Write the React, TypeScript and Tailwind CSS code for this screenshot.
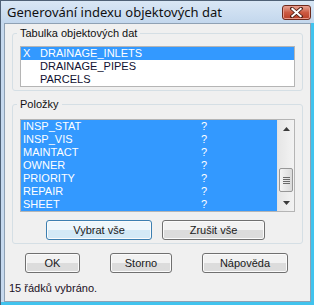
import React from "react";

const tables = [
  { name: "DRAINAGE_INLETS", checked: true },
  { name: "DRAINAGE_PIPES", checked: false },
  { name: "PARCELS", checked: false },
];

const items = ["INSP_STAT", "INSP_VIS", "MAINTACT", "OWNER", "PRIORITY", "REPAIR", "SHEET"];

function Button({ label, width, active }: { label: string; width: string; active?: boolean }) {
  return (
    <button
      className={`${width} h-[20px] rounded-[3px] border text-[11px] leading-[18px] font-normal text-[#1a1a1a] shadow-[inset_0_0_0_1px_#fbfbfb] ${
        active
          ? "border-[#3c7fb1] bg-gradient-to-b from-[#eef7fc] from-50% to-[#d3e9f6] to-50%"
          : "border-[#707070] bg-gradient-to-b from-[#f2f2f2] from-50% to-[#dcdcdc] to-50%"
      }`}
    >
      {label}
    </button>
  );
}

function CloseButton() {
  return (
    <div className="w-[29px] h-[15px] rounded-[3px] border border-[#6e2a1c] bg-gradient-to-b from-[#e4a595] via-[#cc5a42] to-[#b83e26] flex items-center justify-center shadow-[inset_0_0_0_1px_#e8998a]">
      <svg width="13" height="11" viewBox="0 0 13 11">
        <path d="M2 1.5 L11 9.5 M11 1.5 L2 9.5" stroke="#4a1a12" strokeWidth="3.6" strokeLinecap="square" />
        <path d="M2.3 1.8 L10.7 9.2 M10.7 1.8 L2.3 9.2" stroke="#ffffff" strokeWidth="2" strokeLinecap="square" />
      </svg>
    </div>
  );
}

function Scrollbar() {
  return (
    <div className="w-[17px] flex flex-col bg-gradient-to-r from-[#e6e6e6] to-[#f3f3f3] border-l border-[#e3e3e3]">
      <div className="h-[17px] flex items-center justify-center">
        <svg width="7" height="4" viewBox="0 0 7 4">
          <path d="M3.5 0 L7 4 L0 4 Z" fill="#3a3a3a" />
        </svg>
      </div>
      <div className="flex-1 flex flex-col justify-end pb-[2px]">
        <div className="mx-[1px] h-[24px] rounded-[2px] border border-[#979797] bg-gradient-to-r from-[#f4f4f4] to-[#dadada] flex flex-col items-center justify-center gap-[1px]">
          <div className="w-[7px] h-[1px] bg-[#6a6a6a]" />
          <div className="w-[7px] h-[1px] bg-[#6a6a6a]" />
          <div className="w-[7px] h-[1px] bg-[#6a6a6a]" />
          <div className="w-[7px] h-[1px] bg-[#6a6a6a]" />
        </div>
      </div>
      <div className="h-[17px] flex items-center justify-center">
        <svg width="7" height="4" viewBox="0 0 7 4">
          <path d="M0 0 L7 0 L3.5 4 Z" fill="#3a3a3a" />
        </svg>
      </div>
    </div>
  );
}

export default function App() {
  return (
    <div className="w-[314px] h-[305px] flex flex-col bg-[#c6d9ee] border-l border-t border-[#4f6176] font-['Liberation_Sans',Arial,sans-serif] text-[11px] text-black overflow-hidden">
      {/* Title bar */}
      <div className="h-[22px] flex items-center justify-between pl-[6px] pr-[3px] bg-gradient-to-b from-[#d9e7f5] to-[#c3d7ed]">
        <span className="font-['Noto_Sans',sans-serif] text-[13px] leading-[16px] text-[#101010]">
          Generování indexu objektových dat
        </span>
        <CloseButton />
      </div>

      {/* Frame + client */}
      <div className="flex-1 flex pl-[3px] border-r-[3px] border-b-[3px] border-[#41c3ee]">
        <div className="flex-1 flex flex-col bg-[#f0f0f0] border border-[#8fa1b4] px-[7px]">
          <fieldset className="mt-[3px] border border-[#d5dfe5] rounded-[3px] px-[7px] pb-[3px] pt-[6px]">
            <legend className="-ml-[3px] px-[3px] leading-[13px] text-[#101010]">Tabulka objektových dat</legend>
            <div className="h-[41px] border border-[#b5b5b5] bg-white flex flex-col">
              {tables.map((t) => (
                <div
                  key={t.name}
                  className={`h-[13px] leading-[13px] flex pl-[2px] ${t.checked ? "bg-[#3399ff] text-white" : "text-[#101030]"}`}
                >
                  <span className="w-[17px]">{t.checked ? "X" : ""}</span>
                  <span>{t.name}</span>
                </div>
              ))}
            </div>
          </fieldset>

          <fieldset className="mt-[7px] border border-[#d5dfe5] rounded-[3px] px-[7px] pb-[3px] pt-[8px]">
            <legend className="-ml-[3px] px-[3px] leading-[13px] text-[#101010]">Položky</legend>
            <div className="h-[93px] border border-[#b5b5b5] bg-white flex">
              <div className="flex-1 flex flex-col bg-[#3399ff] text-white">
                {items.map((name) => (
                  <div key={name} className="h-[13px] leading-[13px] flex pl-[2px]">
                    <span className="w-[178px]">{name}</span>
                    <span>?</span>
                  </div>
                ))}
              </div>
              <Scrollbar />
            </div>
            <div className="mt-[8px] ml-[26px] flex gap-[10px]">
              <Button label="Vybrat vše" width="w-[106px]" active />
              <Button label="Zrušit vše" width="w-[103px]" />
            </div>
          </fieldset>

          <div className="mt-[9px] ml-[13px] flex gap-[30px]">
            <Button label="OK" width="w-[55px]" />
            <Button label="Storno" width="w-[62px]" />
            <Button label="Nápověda" width="w-[86px]" />
          </div>

          <div className="mt-[9px] -ml-[3px] leading-[13px] text-[#1a0f24]">15 řádků vybráno.</div>
        </div>
      </div>
    </div>
  );
}
